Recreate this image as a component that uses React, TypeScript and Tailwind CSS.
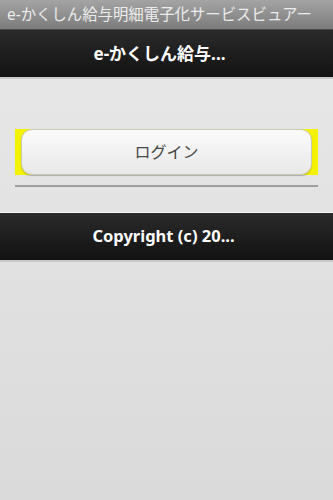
import React from "react";

export default function App() {
  const font = { fontFamily: '"Noto Sans", "Noto Sans CJK JP", sans-serif' };
  return (
    <div
      className="w-[333px] h-[500px] flex flex-col bg-gradient-to-b from-[#e9e9e9] to-[#dadada] overflow-hidden"
      style={font}
    >
      <div className="h-[30px] flex items-center pl-[7px] bg-gradient-to-b from-[#a4a4a4] to-[#7c7c7c] border-b border-[#4a4a4a] text-[#ececec] text-[15.4px] leading-none whitespace-nowrap">
        e-かくしん給与明細電子化サービスビュアー
      </div>
      <div className="h-[49px] flex items-center justify-center bg-gradient-to-b from-[#2b2b2b] to-[#121212] border-b-2 border-[#c8c8c8] text-white font-bold text-[17px] leading-none pr-[14px]">
        e-かくしん給与...
      </div>
      <div className="h-[50px]" />
      <div className="mx-[15px] h-[46px] bg-[#f5f200] px-[6px] flex">
        <div className="flex-1 rounded-[11px] bg-gradient-to-b from-[#fbfbfb] to-[#e8e8e8] border border-[#c9c9b0] shadow-[0_1px_1px_rgba(0,0,0,0.25)] flex items-center justify-center text-[#474747] text-[16px] leading-none">
          ログイン
        </div>
      </div>
      <div className="mx-[15px] mt-[10px] h-[2px] bg-[#9e9e9e]" />
      <div className="h-[25px]" />
      <div className="h-[50px] flex items-center justify-center bg-gradient-to-b from-[#2b2b2b] to-[#121212] border-t border-[#f5f5f5] border-b-2 border-b-[#c8c8c8] text-white font-bold text-[16.5px] leading-none pr-[6px]">
        Copyright (c) 20...
      </div>
    </div>
  );
}
